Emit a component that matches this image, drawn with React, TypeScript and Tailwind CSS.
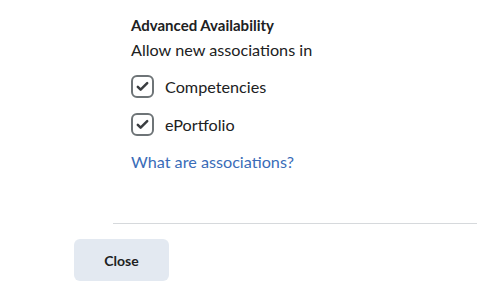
import React from 'react'

const Check = () => (
  <span className="flex h-[23px] w-[23px] items-center justify-center rounded-[6px] border-2 border-[#6e7477] bg-white">
    <svg viewBox="0 0 24 24" className="h-[15px] w-[15px]" fill="none">
      <path d="M4.5 12.5l4.5 4.5L19.5 6.5" stroke="#3a3d40" strokeWidth="4" strokeLinecap="round" strokeLinejoin="round" />
    </svg>
  </span>
)

export default function App() {
  return (
    <div className="h-[293px] w-[477px] bg-white text-[#202122]" style={{ fontFamily: 'Lato, "Noto Sans", sans-serif' }}>
      <div className="pl-[131px] pt-[16px]">
        <h3 className="text-[15px] font-bold leading-[18px] text-[#202122]">Advanced Availability</h3>
        <p className="mt-[6px] text-[16.2px] leading-[20px]">Allow new associations in</p>
        <label className="mt-[15px] flex items-center gap-[11px]">
          <Check />
          <span className="text-[16.2px] leading-[20px]">Competencies</span>
        </label>
        <label className="mt-[15px] flex items-center gap-[11px]">
          <Check />
          <span className="text-[16.2px] leading-[20px]">ePortfolio</span>
        </label>
        <a className="mt-[16px] block text-[16.2px] leading-[20px] text-[#3a6cb8]">What are associations?</a>
      </div>
      <div className="ml-[113px] mt-[51px] h-px bg-[#d6d9dc]" />
      <div className="pl-[74px] pt-[15px]">
        <button className="h-[42px] w-[95px] rounded-[6px] bg-[#e3e9f1] text-[14px] font-bold text-[#202122]">Close</button>
      </div>
    </div>
  )
}
